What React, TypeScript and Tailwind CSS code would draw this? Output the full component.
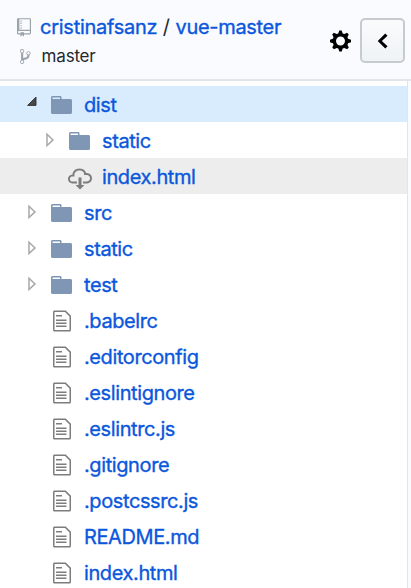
import React from "react";

type IconProps = { d: string; box: string; className: string };

function Icon({ d, box, className }: IconProps) {
  return (
    <svg viewBox={box} className={`block shrink-0 ${className}`} fill="currentColor" aria-hidden="true">
      <path fillRule="evenodd" d={d} />
    </svg>
  );
}

const paths = {
  repo: "M4 9H3V8h1v1zm0-3H3v1h1V6zm0-2H3v1h1V4zm0-2H3v1h1V2zm8-1v12c0 .55-.45 1-1 1H6v2l-1.5-1.5L3 16v-2H1c-.55 0-1-.45-1-1V1c0-.55.45-1 1-1h10c.55 0 1 .45 1 1zm-1 10H1v2h2v-1h3v1h5v-2zm0-10H2v9h9V1z",
  branch:
    "M10 5c0-1.11-.89-2-2-2a1.993 1.993 0 0 0-1 3.72v.3c-.02.52-.23.98-.63 1.38-.4.4-.86.61-1.38.63-.83.02-1.48.16-2 .45V4.72a1.993 1.993 0 0 0-1-3.72C.88 1 0 1.89 0 3a2 2 0 0 0 1 1.72v6.56c-.59.35-1 .99-1 1.72 0 1.11.89 2 2 2 1.11 0 2-.89 2-2 0-.53-.2-1-.53-1.36.09-.06.48-.41.59-.47.25-.11.56-.17.94-.17 1.05-.05 1.95-.45 2.75-1.25S8.95 7.77 9 6.73h-.02C9.59 6.37 10 5.73 10 5zM2 1.8c.66 0 1.2.55 1.2 1.2 0 .65-.55 1.2-1.2 1.2C1.35 4.2.8 3.65.8 3c0-.65.55-1.2 1.2-1.2zm0 12.41c-.66 0-1.2-.55-1.2-1.2 0-.65.55-1.2 1.2-1.2.65 0 1.2.55 1.2 1.2 0 .65-.55 1.2-1.2 1.2zm6-8c-.66 0-1.2-.55-1.2-1.2 0-.65.55-1.2 1.2-1.2.65 0 1.2.55 1.2 1.2 0 .65-.55 1.2-1.2 1.2z",
  gear: "M14 8.77v-1.6l-1.94-.64-.45-1.09.88-1.84-1.13-1.13-1.81.91-1.09-.45-.69-1.92h-1.6l-.63 1.94-1.11.45-1.84-.88-1.13 1.13.91 1.81-.45 1.09L0 7.23v1.59l1.94.64.45 1.09-.88 1.84 1.13 1.13 1.81-.91 1.09.45.69 1.92h1.59l.63-1.94 1.11-.45 1.84.88 1.13-1.13-.92-1.81.47-1.09L14 8.75v.02zM7 11c-1.66 0-3-1.34-3-3s1.34-3 3-3 3 1.34 3 3-1.34 3-3 3z",
  chevron: "M5.5 3L7 4.5 3.25 8 7 11.5 5.5 13l-5-5z",
  file: "M6 5H2V4h4v1zM2 8h7V7H2v1zm0 2h7V9H2v1zm0 2h7v-1H2v1zm10-7.5V14c0 .55-.45 1-1 1H1c-.55 0-1-.45-1-1V2c0-.55.45-1 1-1h7.5L12 4.5zM11 5L8 2H1v12h10V5z",
  folder:
    "M13 4H7V3c0-.66-.31-1-1-1H1c-.55 0-1 .45-1 1v10c0 .55.45 1 1 1h12c.55 0 1-.45 1-1V5c0-.55-.45-1-1-1zM6 4H1V3h5v1z",
  cloud:
    "M9 12h2l-3 3-3-3h2V7h2v5zm3-8c0-.44-.91-3-4.5-3C5.08 1 3 2.92 3 5 1.02 5 0 6.52 0 8c0 1.53 1 3 3 3h3V9.7H3C1.38 9.7 1.3 8.28 1.3 8c0-.17.05-1.7 1.7-1.7h1.3V5c0-1.39 1.56-2.7 3.2-2.7 2.55 0 3.13 1.55 3.2 1.8v1.2H12c.81 0 2.7.22 2.7 2.2 0 2.09-2.25 2.2-2.7 2.2h-2V11h2c2.08 0 4-1.16 4-3.5C16 5.06 14.08 4 12 4z",
};

type Kind = "open" | "folder" | "file" | "download";
type Node = { name: string; kind: Kind; nested?: boolean; bg?: string };

const nodes: Node[] = [
  { name: "dist", kind: "open", bg: "bg-[#d8ecfe]" },
  { name: "static", kind: "folder", nested: true },
  { name: "index.html", kind: "download", nested: true, bg: "bg-[#ededed]" },
  { name: "src", kind: "folder" },
  { name: "static", kind: "folder" },
  { name: "test", kind: "folder" },
  { name: ".babelrc", kind: "file" },
  { name: ".editorconfig", kind: "file" },
  { name: ".eslintignore", kind: "file" },
  { name: ".eslintrc.js", kind: "file" },
  { name: ".gitignore", kind: "file" },
  { name: ".postcssrc.js", kind: "file" },
  { name: "README.md", kind: "file" },
  { name: "index.html", kind: "file" },
];

function Toggle({ kind }: { kind: Kind }) {
  return (
    <svg viewBox="0 0 12 36" className="block h-9 w-3 shrink-0" aria-hidden="true">
      {kind === "open" && <path d="M9 11v8.4H0.6z" fill="#484848" stroke="#2e2e2e" strokeWidth="0.9" />}
      {kind === "folder" && <path d="M2 12.2v11.4L8 17.9z" fill="#fff" stroke="#a9a9a9" strokeWidth="1.5" />}
    </svg>
  );
}

function NodeIcon({ kind }: { kind: Kind }) {
  if (kind === "file") return <Icon d={paths.file} box="0 0 12 16" className="mt-[7px] ml-0.5 h-6 w-[18px] text-[#7d7d7d]" />;
  if (kind === "download") return <Icon d={paths.cloud} box="0 0 16 16" className="mt-[8.5px] -ml-px h-6 w-6 text-[#7d7d7d]" />;
  return <Icon d={paths.folder} box="0 0 14 16" className="mt-[7px] h-6 w-[21px] text-[#7f96b4]" />;
}

function Row({ node }: { node: Node }) {
  return (
    <li className={`flex h-9 items-start ${node.nested ? "pl-[45px]" : "pl-[27px]"} ${node.bg ?? ""}`}>
      <Toggle kind={node.kind} />
      <span className="ml-3 flex w-[33px] shrink-0">
        <NodeIcon kind={node.kind} />
      </span>
      <a className="text-[20px] leading-[39px] tracking-[-0.4px] whitespace-nowrap text-[#0b57dc] [-webkit-text-stroke:0.35px_#0b57dc]">
        {node.name}
      </a>
    </li>
  );
}

export default function App() {
  return (
    <div className="flex h-[588px] w-[411px] flex-col overflow-hidden bg-[#fafbfe] font-['Inter','Liberation_Sans',sans-serif]">
      <header className="flex h-[81px] shrink-0 border-b-2 border-[#e1e4e8] bg-[#fafbfe]">
        <div className="flex w-[330px] flex-col pl-[17px]">
          <div className="mt-[14px] flex h-[26px] items-center">
            <Icon d={paths.repo} box="0 0 12 16" className="h-[19px] w-[14px] text-[#9aa2aa]" />
            <p className="ml-[9px] text-[20px] leading-[26px] whitespace-nowrap text-[#24292e]">
              <a className="tracking-[-0.26px] text-[#0b57dc] [-webkit-text-stroke:0.35px_#0b57dc]">cristinafsanz</a>
              <span className="mx-[5.5px]">/</span>
              <a className="tracking-[-0.32px] text-[#0b57dc] [-webkit-text-stroke:0.35px_#0b57dc]">vue-master</a>
            </p>
          </div>
          <div className="mt-[5px] flex h-[22px] items-center">
            <Icon d={paths.branch} box="0 0 10 16" className="ml-[3px] h-[17px] w-[10.6px] text-[#9aa2aa]" />
            <span className="ml-[11px] text-[17px] leading-[22px] tracking-[-0.2px] text-[#24292e]">master</span>
          </div>
        </div>
        <Icon d={paths.gear} box="0 0 14 16" className="mt-[29px] h-6 w-[21px] text-black" />
        <button className="mt-[18px] ml-[9px] flex h-[45px] w-[45px] items-center justify-center rounded-[5px] border-2 border-[#c6cbd0] bg-linear-to-b from-[#fafbfc] to-[#eff3f6]">
          <Icon d={paths.chevron} box="0 0 8 16" className="h-6 w-3 text-black" />
        </button>
      </header>
      <main className="min-h-0 w-[408px] flex-1 border-r border-[#e1e4e8] bg-white pt-[5px]">
        <ul>
          {nodes.map((node, i) => (
            <Row key={i} node={node} />
          ))}
        </ul>
      </main>
    </div>
  );
}
